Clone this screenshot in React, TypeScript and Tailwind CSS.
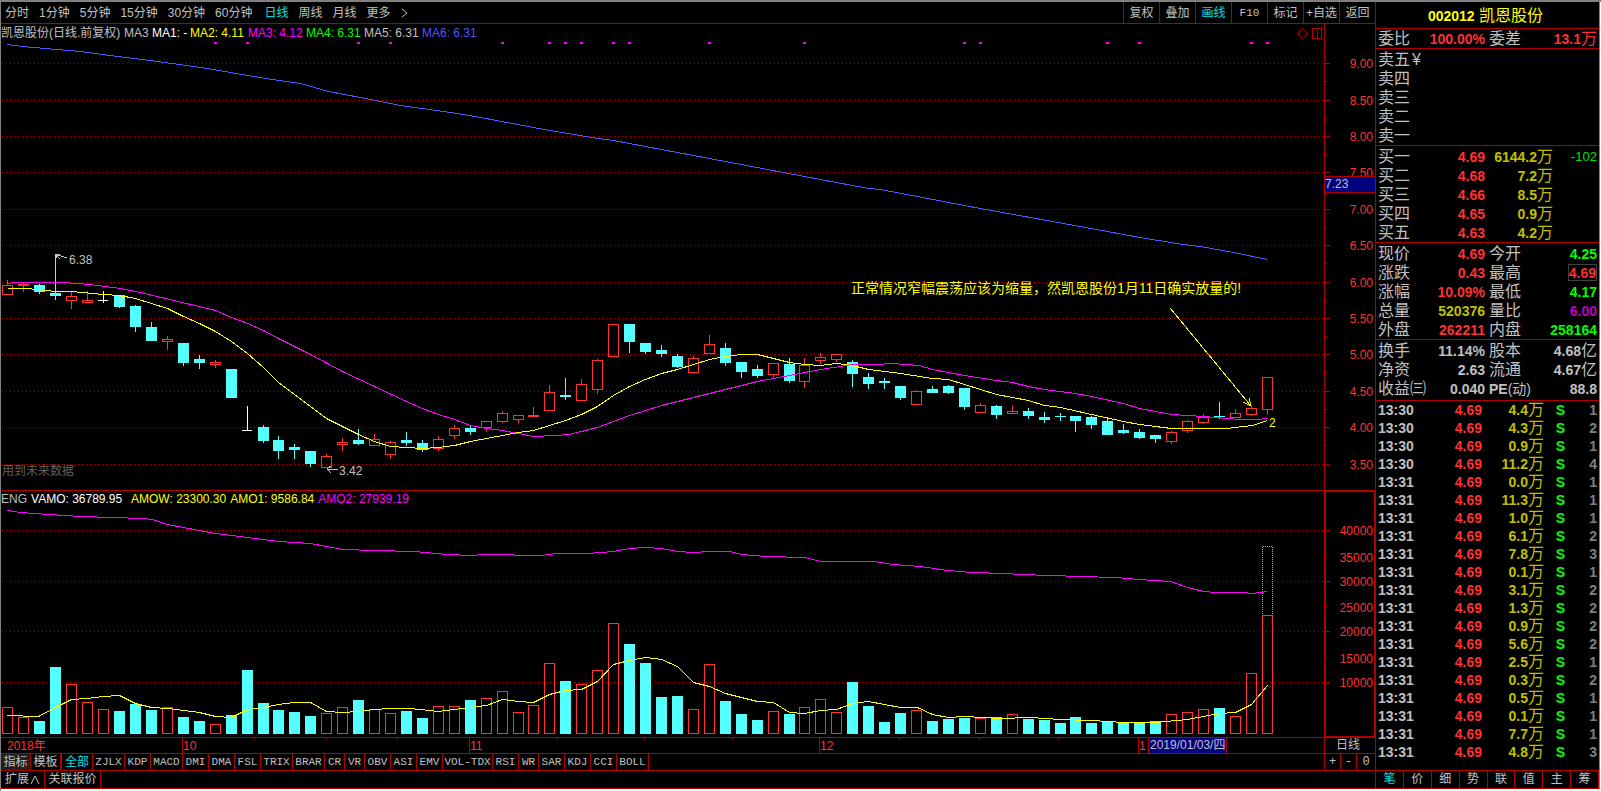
import type { ReactNode } from "react";
import clsx from "clsx";

type Kind = "up" | "down" | "flat";
// kind, high, body top, body bottom, low, volume top
type Bar = [Kind, number, number, number, number, number];

const RED = "#b00000";
const UP = "#ff3232";
const DOWN = "#54ffff";

const bars: Bar[] = [
  ["up", 280, 285, 294, 294, 707],
  ["up", 283, 284, 285, 291, 717],
  ["down", 284, 285, 291, 293, 721],
  ["down", 254, 293, 295, 299, 667],
  ["up", 291, 296, 300, 308, 684],
  ["up", 291, 300, 302, 302, 702],
  ["flat", 291, 300, 300, 302, 709],
  ["down", 295, 295, 306, 307, 711],
  ["down", 305, 306, 326, 331, 704],
  ["down", 322, 327, 340, 340, 710],
  ["up", 336, 339, 341, 349, 707],
  ["down", 343, 343, 362, 365, 717],
  ["down", 355, 359, 362, 368, 721],
  ["up", 360, 362, 364, 367, 724],
  ["down", 369, 369, 397, 397, 715],
  ["flat", 406, 430, 430, 430, 670],
  ["down", 425, 427, 440, 442, 703],
  ["down", 436, 440, 450, 458, 710],
  ["down", 444, 447, 449, 458, 712],
  ["down", 451, 451, 463, 466, 716],
  ["up", 454, 456, 467, 467, 713],
  ["up", 438, 442, 444, 450, 707],
  ["down", 429, 440, 443, 444, 700],
  ["up", 434, 439, 445, 445, 709],
  ["up", 441, 442, 454, 458, 713],
  ["down", 432, 440, 442, 445, 711],
  ["down", 440, 443, 449, 451, 718],
  ["up", 436, 439, 448, 450, 706],
  ["up", 425, 428, 435, 438, 706],
  ["down", 426, 428, 431, 434, 700],
  ["up", 421, 421, 427, 431, 698],
  ["up", 411, 413, 421, 422, 691],
  ["up", 415, 415, 419, 422, 712],
  ["up", 407, 415, 416, 416, 705],
  ["up", 385, 392, 410, 410, 663],
  ["down", 378, 395, 396, 399, 681],
  ["up", 379, 384, 400, 400, 684],
  ["up", 359, 360, 389, 393, 670],
  ["up", 324, 324, 356, 356, 623],
  ["down", 324, 324, 341, 352, 644],
  ["down", 343, 343, 351, 353, 663],
  ["down", 345, 350, 353, 356, 697],
  ["down", 354, 356, 366, 367, 696],
  ["up", 356, 358, 372, 373, 709],
  ["up", 335, 344, 353, 353, 664],
  ["down", 343, 348, 362, 365, 701],
  ["down", 362, 362, 371, 377, 714],
  ["down", 365, 369, 375, 377, 720],
  ["up", 363, 363, 374, 377, 711],
  ["down", 358, 364, 380, 382, 714],
  ["up", 358, 365, 381, 387, 707],
  ["up", 353, 357, 360, 363, 699],
  ["up", 354, 354, 359, 361, 712],
  ["down", 360, 362, 373, 386, 682],
  ["down", 373, 377, 383, 388, 706],
  ["down", 378, 381, 382, 388, 722],
  ["down", 386, 386, 397, 399, 713],
  ["up", 390, 391, 404, 404, 710],
  ["down", 386, 389, 392, 392, 721],
  ["down", 385, 386, 392, 393, 719],
  ["down", 388, 388, 406, 409, 718],
  ["up", 403, 405, 412, 412, 718],
  ["down", 405, 406, 414, 418, 717],
  ["up", 406, 411, 413, 413, 714],
  ["down", 408, 411, 415, 418, 719],
  ["down", 412, 417, 419, 422, 720],
  ["down", 413, 416, 416, 420, 723],
  ["down", 416, 416, 420, 431, 717],
  ["down", 416, 417, 424, 428, 723],
  ["down", 419, 421, 434, 434, 722],
  ["down", 424, 430, 432, 433, 723],
  ["down", 429, 432, 437, 438, 723],
  ["down", 435, 435, 438, 442, 721],
  ["up", 431, 432, 441, 443, 714],
  ["up", 420, 421, 430, 432, 712],
  ["up", 414, 417, 422, 423, 709],
  ["down", 402, 416, 416, 418, 708],
  ["up", 409, 413, 417, 417, 716],
  ["up", 405, 408, 414, 415, 673],
  ["up", 377, 377, 409, 414, 615],
];

const signals = [13, 15, 22, 24, 31, 34, 35, 36, 38, 39, 44, 50, 60, 61, 69, 71, 78, 79];

const ma6 =
  "7,44 22,46 45,48 80,51 102,54 125,57 150,60 200,67 230,72 265,78 300,83 328,91 360,97 400,105 450,112 480,117 549,130 597,138 613,140 709,158 804,176 868,188 880,189 964,205 980,208 1107,231 1139,237 1183,244 1200,246 1233,252 1267,259";
const ma3 =
  "7,283 15,282 62,282 90,284 120,288 140,292 165,298 190,304 215,310 231,317 247,323 263,330 278,338 310,354 342,371 374,386 406,401 422,408 438,414 454,419 470,425 486,428 502,430 518,433 533,436 555,435 568,434 581,431 597,427 613,421 629,415 661,405 693,397 725,389 757,381 789,375 820,369 840,366 852,364 876,364 892,363 919,365 932,369 964,375 996,380 1012,382 1028,386 1044,389 1075,393 1091,396 1123,403 1139,408 1155,411 1171,414 1203,416 1240,419 1256,419 1267,418";
const ma2 =
  "7,288 27,288 55,291 71,291 103,294 119,295 135,298 151,303 167,308 183,316 199,323 215,331 231,341 247,353 263,367 278,382 310,406 326,418 342,426 358,434 374,441 390,446 406,447 422,448 438,447 454,445 470,441 486,438 502,435 518,432 533,430 549,425 565,420 581,414 597,406 613,395 629,386 645,379 661,373 677,369 693,364 709,359 725,356 741,354 757,354 773,358 789,362 804,364 820,365 836,363 852,365 868,369 900,373 932,378 948,379 964,384 980,389 996,394 1028,400 1044,405 1060,407 1091,414 1123,421 1139,424 1171,428 1227,428 1243,426 1252,425 1267,420";
const amo2 =
  "7,510 20,512 48,514 80,516 112,517 143,518 152,519 167,524 183,527 199,530 215,533 247,537 278,541 310,543 326,546 342,549 374,550 414,551 447,554 471,555 485,554 511,554 515,555 540,555 557,553 587,553 613,551 629,548 645,547 661,548 677,551 693,552 709,551 730,551 741,554 765,556 805,557 820,561 873,561 893,564 920,566 947,570 972,572 1004,573 1020,574 1080,576 1115,577 1139,579 1170,581 1187,587 1203,591 1216,592 1243,592 1252,593 1267,591";
const amo1 =
  "7,715 38,716 55,707 71,699 87,698 103,696 119,695 135,703 151,707 167,708 183,710 199,712 215,716 231,717 247,709 263,707 278,704 294,702 310,702 326,711 342,712 358,711 374,709 390,708 410,708 438,711 454,709 470,707 486,705 502,699 518,701 533,702 549,694 565,690 581,689 597,681 613,664 629,660 645,657 661,659 677,666 693,682 709,686 725,693 741,697 757,701 773,702 789,712 804,713 820,710 836,709 852,703 868,701 884,704 900,707 917,707 932,714 948,717 964,716 1000,718 1030,717 1060,719 1091,720 1123,722 1155,722 1187,719 1203,716 1219,713 1235,712 1251,704 1267,685";

const priceTicks: [string, number][] = [
  ["9.00", 63],
  ["8.50", 100],
  ["8.00", 136],
  ["7.50", 172],
  ["7.00", 209],
  ["6.50", 245],
  ["6.00", 282],
  ["5.50", 318],
  ["5.00", 354],
  ["4.50", 391],
  ["4.00", 427],
  ["3.50", 464],
];
// label, tick y, label y
const volumeTicks: [string, number, number][] = [
  ["40000", 530, 530],
  ["35000", 556, 557],
  ["30000", 581, 581],
  ["25000", 606, 607],
  ["20000", 631, 631],
  ["15000", 657, 658],
  ["10000", 682, 682],
];

// Trading days sit a little under 16px apart
const barX = (i: number) => 7 + 16 * i - Math.floor((i * 6 + 3) / 100);

const periods = ["分时", "1分钟", "5分钟", "15分钟", "30分钟", "60分钟", "日线", "周线", "月线", "更多"];
const tools = ["复权", "叠加", "画线", "F10", "标记", "+自选", "返回"];

const averages = [
  ["MA2: 4.11", "text-[#ffff00]"],
  ["MA3: 4.12", "text-[#ff00ff]"],
  ["MA4: 6.31", "text-[#00ff00]"],
  ["MA5: 6.31", "text-[#c0c0c0]"],
  ["MA6: 6.31", "text-[#5454ff]"],
];

const indicators: [string, string][] = [
  ["ZJLX", "w-8"],
  ["KDP", "w-[26px]"],
  ["MACD", "w-8"],
  ["DMI", "w-[26px]"],
  ["DMA", "w-[26px]"],
  ["FSL", "w-[26px]"],
  ["TRIX", "w-8"],
  ["BRAR", "w-8"],
  ["CR", "w-5"],
  ["VR", "w-5"],
  ["OBV", "w-[26px]"],
  ["ASI", "w-[26px]"],
  ["EMV", "w-[26px]"],
  ["VOL-TDX", "w-[50px]"],
  ["RSI", "w-[26px]"],
  ["WR", "w-5"],
  ["SAR", "w-[26px]"],
  ["KDJ", "w-[26px]"],
  ["CCI", "w-[26px]"],
  ["BOLL", "w-8"],
];

const sells = ["卖五", "卖四", "卖三", "卖二", "卖一"];
const buys = [
  ["买一", "4.69", "6144.2万", "-102"],
  ["买二", "4.68", "7.2万", ""],
  ["买三", "4.66", "8.5万", ""],
  ["买四", "4.65", "0.9万", ""],
  ["买五", "4.63", "4.2万", ""],
];

const red = "text-[#ff3232]";
const green = "text-[#00ff00]";
const olive = "text-[#c0c000]";
const gray = "text-[#c0c0c0]";

const stats = [
  ["现价", "4.69", red, "今开", "4.25", green],
  ["涨跌", "0.43", red, "最高", "4.69", red],
  ["涨幅", "10.09%", red, "最低", "4.17", green],
  ["总量", "520376", olive, "量比", "6.00", "text-[#c000c0]"],
  ["外盘", "262211", red, "内盘", "258164", green],
];
const fundamentals = [
  ["换手", "11.14%", gray, "股本", "4.68亿", gray],
  ["净资", "2.63", gray, "流通", "4.67亿", gray],
  ["收益㈢", "0.040", gray, "PE(动)", "88.8", gray],
];

const trades = [
  ["13:30", "4.4万", 1],
  ["13:30", "4.3万", 2],
  ["13:30", "0.9万", 1],
  ["13:30", "11.2万", 4],
  ["13:31", "0.0万", 1],
  ["13:31", "11.3万", 1],
  ["13:31", "1.0万", 1],
  ["13:31", "6.1万", 2],
  ["13:31", "7.8万", 3],
  ["13:31", "0.1万", 1],
  ["13:31", "3.1万", 2],
  ["13:31", "1.3万", 2],
  ["13:31", "0.9万", 2],
  ["13:31", "5.6万", 2],
  ["13:31", "2.5万", 1],
  ["13:31", "0.3万", 2],
  ["13:31", "0.5万", 1],
  ["13:31", "0.1万", 1],
  ["13:31", "7.7万", 1],
  ["13:31", "4.8万", 3],
] as const;

const panelTabs = ["笔", "价", "细", "势", "联", "值", "主", "筹"];

// Bold figures with a lighter, larger unit behind them
const Figure = ({ value }: { value: string }) => {
  const unit = value.match(/[万亿]$/)?.[0] ?? "";
  return (
    <>
      <span className="text-sm leading-none font-bold">{unit ? value.slice(0, -1) : value}</span>
      {unit}
    </>
  );
};

const Candle = ({ bar, x }: { bar: Bar; x: number }) => {
  const [kind, high, top, bottom, low] = bar;
  if (kind === "flat") {
    return (
      <g fill="#ffffff">
        <rect x={x} y={high} width={1} height={low - high + 1} />
        <rect x={x - 5} y={top} width={10} height={1} />
      </g>
    );
  }
  if (kind === "down") {
    return (
      <g fill={DOWN}>
        <rect x={x} y={high} width={1} height={low - high + 1} />
        <rect x={x - 5} y={top} width={11} height={bottom - top + 1} />
      </g>
    );
  }
  return (
    <g fill={UP}>
      <rect x={x} y={high} width={1} height={top - high} />
      <rect x={x} y={bottom} width={1} height={low - bottom + 1} />
      <path
        fillRule="evenodd"
        d={`M${x - 5} ${top}h11v${bottom - top + 1}h-11zM${x - 4} ${top + 1}v${Math.max(bottom - top - 1, 0)}h9v-${Math.max(bottom - top - 1, 0)}z`}
      />
    </g>
  );
};

const Line = ({ points, color }: { points: string; color: string }) => (
  <polyline points={points} fill="none" stroke={color} strokeWidth={1} transform="translate(0.5 0.5)" />
);

const GridLine = ({ y }: { y: number }) => (
  <line x1={2} x2="100%" y1={y + 0.5} y2={y + 0.5} stroke={RED} strokeDasharray="1 3" />
);

const PriceChart = () => (
  <svg className="block w-full text-xs" height={448} shapeRendering="crispEdges" role="img" aria-label="日线 K 线图">
    <g transform="translate(-1 -42)">
      {priceTicks.map(([label, y]) => (
        <GridLine key={label} y={y} />
      ))}
      {signals.map((i) => (
        <rect key={i} x={barX(i) - 1} y={42} width={3} height={2} fill="#ff00ff" />
      ))}
      {bars.map((bar, i) => (
        <Candle key={i} bar={bar} x={barX(i)} />
      ))}
      <Line points={ma6} color="#5454ff" />
      <Line points={ma3} color="#ff00ff" />
      <Line points={ma2} color="#ffff00" />

      <g fill="none" stroke="#c0c0c0">
        <path d="M56.5 258v-4h3M57 255l4 1l6 2M56 255l4 4" />
        <path d="M327 469.5h11M327 469l4-3M327 469l4 4" />
      </g>
      <g fill="#c0c0c0">
        <text x={69} y={264}>6.38</text>
        <text x={339} y={475}>3.42</text>
      </g>
      <text x={2} y={475} fill="#606060">用到未来数据</text>

      <text x={851} y={293} fill="#ffff00" className="text-sm">
        正常情况窄幅震荡应该为缩量，然凯恩股份1月11日确实放量的!
      </text>
      <path d="M1170.5 308.5L1250.5 405.5M1243.5 402.5L1250.5 405.5L1249.5 398.5" fill="none" stroke="#ffff00" />
      <text x={1269} y={427} fill="#ffff00">2</text>
    </g>
  </svg>
);

const VolumeChart = () => (
  <svg className="block w-full" height={229} shapeRendering="crispEdges" role="img" aria-label="成交额">
    <g transform="translate(-1 -508)">
      {volumeTicks
        .filter((_, i) => i % 2 === 0)
        .map(([label, y]) => (
          <GridLine key={label} y={y} />
        ))}
      <path d="M1262.5 614V546.5h10V614" fill="none" stroke="#c0c000" strokeDasharray="1 1" />
      {bars.map(([kind, , , , , top], i) => {
        const x = barX(i) - 5;
        const filled = kind === "down" || i === 15;
        return filled ? (
          <rect key={i} x={x} y={top} width={11} height={734 - top} fill={DOWN} />
        ) : (
          <rect key={i} x={x + 0.5} y={top + 0.5} width={10} height={733 - top} fill="none" stroke={UP} />
        );
      })}
      <Line points={amo2} color="#ff00ff" />
      <Line points={amo1} color="#ffff00" />
    </g>
  </svg>
);

const PriceAxis = () => (
  <svg className="block w-full text-xs" height={466} shapeRendering="crispEdges" fill={UP}>
    <g transform="translate(-1325 -24)">
      {priceTicks.map(([label, y], i) => (
        <g key={label}>
          <rect x={1325} y={y} width={5} height={1} fill={RED} />
          {i < priceTicks.length - 1 && <rect x={1325} y={y + 18} width={2} height={1} fill={RED} />}
          <text x={1373} y={y + 5} textAnchor="end">
            {label}
          </text>
        </g>
      ))}
      <rect x={1325} y={176} width={50} height={17} fill={RED} />
      <rect x={1325} y={177} width={50} height={15} fill="#000080" />
      <text x={1325} y={188} fill="#c0c0c0">
        7.23
      </text>
    </g>
  </svg>
);

const VolumeAxis = () => (
  <svg className="block w-full text-xs" height={244} shapeRendering="crispEdges" fill={UP}>
    <g transform="translate(-1326 -492)">
      {volumeTicks.map(([label, y, labelY], i) => (
        <g key={label}>
          <rect x={1325} y={y} width={i % 2 ? 2 : 5} height={1} fill={RED} />
          <text x={1373} y={labelY + 5} textAnchor="end">
            {label}
          </text>
        </g>
      ))}
    </g>
  </svg>
);

const DateAxis = () => (
  <svg className="block w-full text-xs" height={15} shapeRendering="crispEdges" fill={UP}>
    <g transform="translate(-1 -738)">
      {[254, 326, 397, 557, 644, 732, 899, 979, 1058].map((x) => (
        <rect key={x} x={x} y={738} width={1} height={2} fill={RED} />
      ))}
      {[182, 469, 819, 1138].map((x) => (
        <rect key={x} x={x} y={738} width={1} height={15} fill={RED} />
      ))}
      <text x={7} y={750}>2018年</text>
      <text x={183} y={750}>10</text>
      <text x={470} y={750}>11</text>
      <text x={820} y={750}>12</text>
      <text x={1139} y={750}>1</text>
      <rect x={1148} y={738} width={79} height={15} fill={RED} />
      <rect x={1149} y={738} width={77} height={15} fill="#000080" />
      <text x={1150} y={749} fill="#c0c0c0">2019/01/03/四</text>
    </g>
  </svg>
);

const PairTable = ({ rows, boxed }: { rows: string[][]; boxed?: string }) => (
  <table className="w-full table-fixed border-collapse">
    <colgroup>
      <col className="w-[50px]" />
      <col className="w-[59px]" />
      <col className="w-[53px]" />
      <col />
    </colgroup>
    <tbody>
      {rows.map(([l1, v1, c1, l2, v2, c2]) => (
        <tr key={l1} className="h-[19px]">
          <th scope="row" className="p-0 pl-0.5 text-left font-normal whitespace-nowrap">{l1}</th>
          <td className={clsx("p-0 text-right whitespace-nowrap", c1)}>
            <Figure value={v1} />
          </td>
          <th scope="row" className="p-0 pl-1 text-left font-normal whitespace-nowrap">
            {l2.startsWith("PE") ? (
              <span className="text-sm leading-none">
                <b>PE</b>(动)
              </span>
            ) : (
              l2
            )}
          </th>
          <td className={clsx("p-0 pr-0.5 text-right whitespace-nowrap", c2)}>
            {l2 === boxed ? (
              <span className="inline-block h-[17px] border border-[#404040] leading-[15px]">
                <Figure value={v2} />
              </span>
            ) : (
              <Figure value={v2} />
            )}
          </td>
        </tr>
      ))}
    </tbody>
  </table>
);

const Section = ({ className, children }: { className?: string; children: ReactNode }) => (
  <section className={clsx("border-b border-[#b00000]", className)}>{children}</section>
);

const QuotePanel = () => (
  <aside className="flex w-56 shrink-0 flex-col border-l border-[#b00000] text-base leading-[19px] text-[#c0c0c0]">
    <Section className="pt-px pr-1">
      <h1 className="text-center leading-[25px] text-[#ffff00]">
        <span className="text-sm leading-none font-bold">002012</span> 凯恩股份
      </h1>
    </Section>
    <Section>
      <PairTable rows={[["委比", "100.00%", red, "委差", "13.1万", red]]} />
    </Section>
    <Section className="pt-px">
      <ul>
        {sells.map((s) => (
          <li key={s} className="flex gap-0.5 pl-0.5">
            {s}
            {s === "卖五" && <span>¥</span>}
          </li>
        ))}
      </ul>
    </Section>
    <Section className="pt-px">
      <table className="w-full table-fixed border-collapse">
        <colgroup>
          <col className="w-[50px]" />
          <col className="w-[59px]" />
          <col className="w-[68px]" />
          <col />
        </colgroup>
        <tbody>
          {buys.map(([label, price, volume, change]) => (
            <tr key={label} className="h-[19px]">
              <th scope="row" className="p-0 pl-0.5 text-left font-normal">{label}</th>
              <td className={clsx("p-0 text-right", red)}>
                <Figure value={price} />
              </td>
              <td className={clsx("p-0 text-right whitespace-nowrap", olive)}>
                <Figure value={volume} />
              </td>
              <td className="p-0 pr-0.5 text-right text-[13px] text-[#00e000]">{change}</td>
            </tr>
          ))}
        </tbody>
      </table>
    </Section>
    <Section className="pt-px">
      <PairTable rows={stats} boxed="最高" />
    </Section>
    <Section className="pt-px pb-0.5">
      <PairTable rows={fundamentals} />
    </Section>

    <table className="w-full table-fixed border-collapse leading-[18px]">
      <colgroup>
        <col className="w-[50px]" />
        <col className="w-[56px]" />
        <col className="w-[62px]" />
        <col className="w-[21px]" />
        <col />
      </colgroup>
      <tbody>
        {trades.map(([time, volume, count], i) => (
          <tr key={i} className="h-[18px]">
            <td className="p-0 pl-0.5">
              <Figure value={time} />
            </td>
            <td className={clsx("p-0 text-right", red)}>
              <Figure value="4.69" />
            </td>
            <td className={clsx("p-0 text-right whitespace-nowrap", olive)}>
              <Figure value={volume} />
            </td>
            <td className="p-0 text-right text-[#00ff00]">
              <Figure value="S" />
            </td>
            <td className="p-0 pr-0.5 text-right text-[#808080]">
              <Figure value={String(count)} />
            </td>
          </tr>
        ))}
      </tbody>
    </table>

    <nav className="mt-auto flex border-y border-r border-[#b00000] text-xs leading-[17px]">
      {panelTabs.map((tab, i) => (
        <button
          key={tab}
          type="button"
          className={clsx("flex-1", i === 0 ? "text-[#00e0e0]" : "border-l border-[#b00000]")}
        >
          {tab}
        </button>
      ))}
    </nav>
  </aside>
);

const App = () => (
  <div className="min-h-screen border-t-2 border-l border-[#808080] bg-black font-['Liberation_Sans','Noto_Sans_CJK_SC',sans-serif] text-xs text-[#c0c0c0]">
    <div className="flex border-r border-b-2 border-white">
      <div className="flex min-w-0 flex-1 border-r border-[#808080]">
        <main className="flex min-w-0 flex-1 flex-col">
          <header className="flex border-b border-[#b00000] leading-5">
            <nav className="flex flex-1 gap-2.5 pt-px pl-1 whitespace-nowrap">
              {periods.map((p) => (
                <button key={p} type="button" className={clsx(p === "日线" && "ml-0.5 text-[#00e0e0]")}>
                  {p}
                </button>
              ))}
              <svg className="my-auto h-3 w-2" viewBox="0 0 8 12" fill="none" stroke="#c0c0c0">
                <path d="M1 2l5 4l-5 4" />
              </svg>
            </nav>
            {tools.map((t) => (
              <button
                key={t}
                type="button"
                className={clsx(
                  "w-9 border-l border-[#b00000] pt-px whitespace-nowrap",
                  t === "画线" && "text-[#00e0e0]",
                  t === "F10" && "font-['Liberation_Mono',monospace] text-[11px]",
                )}
              >
                {t}
              </button>
            ))}
          </header>

          <div className="flex">
            <section className="min-w-0 flex-1">
              <div className="flex gap-1 leading-[18px] whitespace-nowrap">
                <span className="w-[119px]">凯恩股份(日线.前复权)</span>
                <span className="w-6">MA3</span>
                <span className="w-[34px] text-white">MA1: -</span>
                {averages.map(([label, color]) => (
                  <span key={label} className={clsx("w-[54px]", color)}>
                    {label}
                  </span>
                ))}
                <svg className="mt-1 mr-px ml-auto" width={26} height={12} fill="none" stroke={RED}>
                  <path d="M5.5 0.5l5 5l-5 5l-5-5z" />
                  <path d="M15.5 0.5h9v10h-9zM20.5 0.5v10" shapeRendering="crispEdges" />
                </svg>
              </div>
              <PriceChart />
            </section>
            <div className="w-[51px] shrink-0 border-l border-[#b00000]">
              <PriceAxis />
            </div>
          </div>

          <div className="flex">
            <section className="min-w-0 flex-1 border-t border-[#b00000]">
              <div className="flex gap-1 leading-[17px] whitespace-nowrap">
                <span>ENG</span>
                <span className="w-24 text-white">VAMO: 36789.95</span>
                <span className="text-[#ffff00]">AMOW: 23300.30</span>
                <span className="text-[#ffff00]">AMO1: 9586.84</span>
                <span className="text-[#ff00ff]">AMO2: 27939.19</span>
              </div>
              <VolumeChart />
            </section>
            <div className="w-[51px] shrink-0 border-t-2 border-r border-b border-l-2 border-[#b00000]">
              <VolumeAxis />
            </div>
          </div>

          <div className="flex border-t border-[#b00000]">
            <div className="min-w-0 flex-1">
              <DateAxis />
            </div>
            <div className="w-[51px] shrink-0 border-l border-[#b00000] pr-1 text-center leading-[15px]">日线</div>
          </div>

          <nav className="flex border-y border-[#b00000] leading-4">
            <button type="button" className="w-[30px] border-r border-[#b00000] bg-[#202020]">
              指标
            </button>
            <button type="button" className="w-[31px] border-r-2 border-[#b00000]">
              模板
            </button>
            <button type="button" className="w-[31px] border-r border-[#b00000] text-[#00e0e0]">
              全部
            </button>
            {indicators.map(([name, width]) => (
              <button
                key={name}
                type="button"
                className={clsx(
                  "shrink-0 border-r border-[#b00000] text-center font-['Liberation_Mono',monospace] text-[11px] whitespace-nowrap",
                  width,
                )}
              >
                {name}
              </button>
            ))}
            <div className="ml-auto flex w-[51px] font-['Liberation_Mono',monospace]">
              <button type="button" className="w-4 border-l border-[#b00000]">+</button>
              <button type="button" className="w-4 border-l border-[#b00000]">-</button>
              <button type="button" className="flex-1 border-l border-[#b00000]">0</button>
            </div>
          </nav>
          <nav className="flex border-b border-[#b00000] leading-[17px]">
            <button type="button" className="flex w-11 items-center justify-center gap-px border-r border-[#b00000]">
              扩展
              <svg width={10} height={10} fill="none" stroke="#c0c0c0">
                <path d="M1 9l4-8l4 8" />
              </svg>
            </button>
            <button type="button" className="w-14 border-r border-[#b00000] whitespace-nowrap">
              关联报价
            </button>
          </nav>
        </main>
        <QuotePanel />
      </div>
    </div>
  </div>
);

export default App;
